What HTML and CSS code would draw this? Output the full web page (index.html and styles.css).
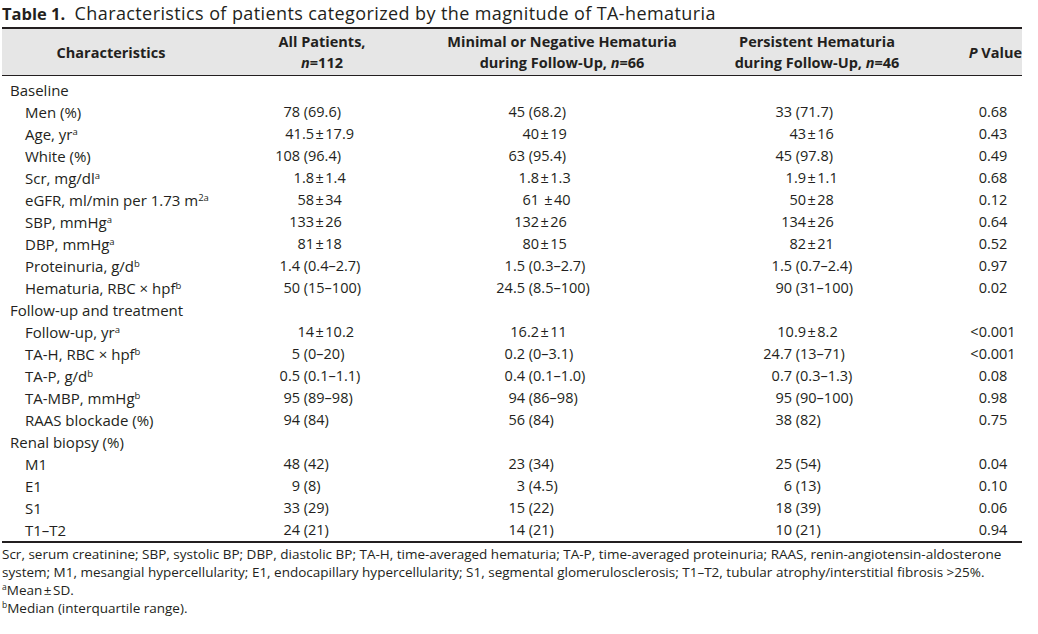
FILE: index.html
```html
<!DOCTYPE html>
<html lang="en">
<head>
<meta charset="utf-8">
<title>Table 1</title>
<link rel="stylesheet" href="styles.css">
</head>
<body>
<div class="page">
  <div class="caption"><b>Table 1.</b>&nbsp;&nbsp;<span class="ctext">Characteristics of patients categorized by the magnitude of TA-hematuria</span></div>
  <table class="tbl">
    <colgroup>
      <col class="c1"><col class="c2"><col class="c3"><col class="c4"><col class="c5">
    </colgroup>
    <thead>
      <tr>
        <th class="h1">Characteristics</th>
        <th>All Patients,<br><i>n</i>=112</th>
        <th>Minimal or Negative Hematuria<br>during Follow-Up, <i>n</i>=66</th>
        <th>Persistent Hematuria<br>during Follow-Up, <i>n</i>=46</th>
        <th class="h5"><i>P</i> Value</th>
      </tr>
    </thead>
    <tbody>
      <tr class="grp first"><td>Baseline</td><td></td><td></td><td></td><td></td></tr>
      <tr><td>Men (%)</td><td class="v2 p"><span class="a">78</span> (69.6)</td><td class="v3 p"><span class="a">45</span> (68.2)</td><td class="v4 p"><span class="a">33</span> (71.7)</td><td class="pv">0.68</td></tr>
      <tr><td>Age, yr<sup>a</sup></td><td class="v2 m"><span class="a">41.5</span><span class="pm">±</span>17.9</td><td class="v3 m"><span class="a">40</span><span class="pm">±</span>19</td><td class="v4 m"><span class="a">43</span><span class="pm">±</span>16</td><td class="pv">0.43</td></tr>
      <tr><td>White (%)</td><td class="v2 p"><span class="a">108</span> (96.4)</td><td class="v3 p"><span class="a">63</span> (95.4)</td><td class="v4 p"><span class="a">45</span> (97.8)</td><td class="pv">0.49</td></tr>
      <tr><td>Scr, mg/dl<sup>a</sup></td><td class="v2 m"><span class="a">1.8</span><span class="pm">±</span>1.4</td><td class="v3 m"><span class="a">1.8</span><span class="pm">±</span>1.3</td><td class="v4 m"><span class="a">1.9</span><span class="pm">±</span>1.1</td><td class="pv">0.68</td></tr>
      <tr><td>eGFR, ml/min per 1.73 m<sup>2a</sup></td><td class="v2 m"><span class="a">58</span><span class="pm">±</span>34</td><td class="v3 m"><span class="a">61</span> <span class="pm">±</span>40</td><td class="v4 m"><span class="a">50</span><span class="pm">±</span>28</td><td class="pv">0.12</td></tr>
      <tr><td>SBP, mmHg<sup>a</sup></td><td class="v2 m"><span class="a">133</span><span class="pm">±</span>26</td><td class="v3 m"><span class="a">132</span><span class="pm">±</span>26</td><td class="v4 m"><span class="a">134</span><span class="pm">±</span>26</td><td class="pv">0.64</td></tr>
      <tr><td>DBP, mmHg<sup>a</sup></td><td class="v2 m"><span class="a">81</span><span class="pm">±</span>18</td><td class="v3 m"><span class="a">80</span><span class="pm">±</span>15</td><td class="v4 m"><span class="a">82</span><span class="pm">±</span>21</td><td class="pv">0.52</td></tr>
      <tr><td>Proteinuria, g/d<sup>b</sup></td><td class="v2 p"><span class="a">1.4</span> (0.4–2.7)</td><td class="v3 p"><span class="a">1.5</span> (0.3–2.7)</td><td class="v4 p"><span class="a">1.5</span> (0.7–2.4)</td><td class="pv">0.97</td></tr>
      <tr><td>Hematuria, RBC × hpf<sup>b</sup></td><td class="v2 p"><span class="a">50</span> (15–100)</td><td class="v3 p"><span class="a">24.5</span> (8.5–100)</td><td class="v4 p"><span class="a">90</span> (31–100)</td><td class="pv">0.02</td></tr>
      <tr class="grp"><td>Follow-up and treatment</td><td></td><td></td><td></td><td></td></tr>
      <tr><td>Follow-up, yr<sup>a</sup></td><td class="v2 m"><span class="a">14</span><span class="pm">±</span>10.2</td><td class="v3 m"><span class="a">16.2</span><span class="pm">±</span>11</td><td class="v4 m"><span class="a">10.9</span><span class="pm">±</span>8.2</td><td class="pv">&lt;0.001</td></tr>
      <tr><td>TA-H, RBC × hpf<sup>b</sup></td><td class="v2 p"><span class="a">5</span> (0–20)</td><td class="v3 p"><span class="a">0.2</span> (0–3.1)</td><td class="v4 p"><span class="a">24.7</span> (13–71)</td><td class="pv">&lt;0.001</td></tr>
      <tr><td>TA-P, g/d<sup>b</sup></td><td class="v2 p"><span class="a">0.5</span> (0.1–1.1)</td><td class="v3 p"><span class="a">0.4</span> (0.1–1.0)</td><td class="v4 p"><span class="a">0.7</span> (0.3–1.3)</td><td class="pv">0.08</td></tr>
      <tr><td>TA-MBP, mmHg<sup>b</sup></td><td class="v2 p"><span class="a">95</span> (89–98)</td><td class="v3 p"><span class="a">94</span> (86–98)</td><td class="v4 p"><span class="a">95</span> (90–100)</td><td class="pv">0.98</td></tr>
      <tr><td>RAAS blockade (%)</td><td class="v2 p"><span class="a">94</span> (84)</td><td class="v3 p"><span class="a">56</span> (84)</td><td class="v4 p"><span class="a">38</span> (82)</td><td class="pv">0.75</td></tr>
      <tr class="grp"><td>Renal biopsy (%)</td><td></td><td></td><td></td><td></td></tr>
      <tr><td>M1</td><td class="v2 p"><span class="a">48</span> (42)</td><td class="v3 p"><span class="a">23</span> (34)</td><td class="v4 p"><span class="a">25</span> (54)</td><td class="pv">0.04</td></tr>
      <tr><td>E1</td><td class="v2 p"><span class="a">9</span> (8)</td><td class="v3 p"><span class="a">3</span> (4.5)</td><td class="v4 p"><span class="a">6</span> (13)</td><td class="pv">0.10</td></tr>
      <tr><td>S1</td><td class="v2 p"><span class="a">33</span> (29)</td><td class="v3 p"><span class="a">15</span> (22)</td><td class="v4 p"><span class="a">18</span> (39)</td><td class="pv">0.06</td></tr>
      <tr class="last"><td>T1–T2</td><td class="v2 p"><span class="a">24</span> (21)</td><td class="v3 p"><span class="a">14</span> (21)</td><td class="v4 p"><span class="a">10</span> (21)</td><td class="pv">0.94</td></tr>
    </tbody>
  </table>
  <div class="notes">
    <p>Scr, serum creatinine; SBP, systolic BP; DBP, diastolic BP; TA-H, time-averaged hematuria; TA-P, time-averaged proteinuria; RAAS, renin-angiotensin-aldosterone system; M1, mesangial hypercellularity; E1, endocapillary hypercellularity; S1, segmental glomerulosclerosis; T1–T2, tubular atrophy/interstitial fibrosis &gt;25%.</p>
    <p><sup>a</sup>Mean<span class="pm">±</span>SD.</p>
    <p><sup>b</sup>Median (interquartile range).</p>
  </div>
</div>
</body>
</html>
```

FILE: styles.css
```css
html, body {
  margin: 0;
  padding: 0;
  background: #ffffff;
}

body {
  font-family: "Open Sans", "Noto Sans", "Liberation Sans", sans-serif;
  color: #231f20;
}

.page {
  width: 1022px;
  padding: 0 0 0 2px;
}

.caption {
  font-size: 18px;
  line-height: 26px;
  height: 27px;
  white-space: nowrap;
}

.caption b {
  font-weight: 700;
  font-size: 16.5px;
}

.caption .ctext {
  letter-spacing: 0.4px;
}

.tbl {
  width: 1020px;
  border-collapse: collapse;
  table-layout: fixed;
  font-size: 14.5px;
}

.c1 { width: 240px; }
.c2 { width: 160px; }
.c3 { width: 320px; }
.c4 { width: 190px; }
.c5 { width: 110px; }

.tbl thead tr {
  background: #e6e6e6;
  border-top: 2px solid #231f20;
  border-bottom: 1px solid #231f20;
}

.tbl th {
  font-weight: 700;
  font-size: 14.5px;
  line-height: 21px;
  padding: 2px 0 2px;
  height: 42px;
  text-align: center;
  vertical-align: middle;
}

.tbl th.h1 {
  padding-right: 22px;
}

.tbl th.h5 {
  text-align: right;
}

.tbl td {
  height: 22px;
  padding: 0;
  line-height: 22px;
  white-space: nowrap;
  vertical-align: middle;
}

.tbl td:first-child {
  padding-left: 23px;
  font-size: 15px;
}

.tbl tr.grp td:first-child {
  padding-left: 8px;
}

.tbl tr.first td {
  padding-top: 3px;
}

.tbl tr.last {
  border-bottom: 2px solid #231f20;
}

.tbl .a {
  display: inline-block;
  text-align: right;
}

.tbl .p .a { width: 40px; }
.tbl .m .a { width: 54px; }

.pm {
  margin: 0 1.5px;
}

.tbl .v2 { padding-left: 18px; }
.tbl .v3 { padding-left: 83px; }
.tbl .v4 { padding-left: 30px; }

.tbl .pv {
  padding-left: 52px;
  text-align: center;
}

sup {
  font-size: 9.5px;
  line-height: 0;
  vertical-align: 5px;
}

.notes {
  margin-top: 2px;
  font-size: 13.5px;
  line-height: 18px;
  width: 1020px;
}

.notes p {
  margin: 0;
}

.notes sup {
  font-size: 8.5px;
  vertical-align: 5px;
}
```
